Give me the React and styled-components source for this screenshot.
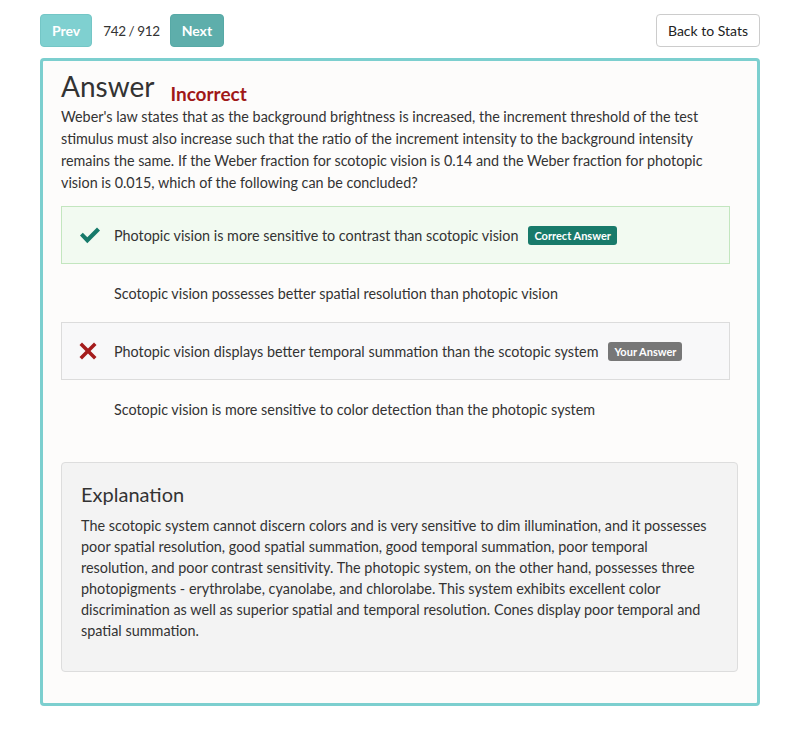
import React from "react";
import styled, { createGlobalStyle } from "styled-components";

const Global = createGlobalStyle`
  html, body { margin: 0; padding: 0; background: #ffffff; }
  body { font-family: Lato, "Open Sans", sans-serif; color: #333333; }
  * { box-sizing: border-box; }
`;

const Page = styled.div`
  padding: 14px 40px 24px 40px;
`;

const Toolbar = styled.div`
  display: flex;
  justify-content: space-between;
  align-items: center;
  height: 33px;
`;

const NavGroup = styled.div`
  display: flex;
  align-items: center;
`;

const NavButton = styled.button`
  height: 33px;
  padding: 0 11px;
  border: 1px solid ${(p) => (p.$dark ? "#57a9a6" : "#74c6c6")};
  border-radius: 4px;
  background: ${(p) => (p.$dark ? "#5eaeab" : "#7fd0d0")};
  color: #ffffff;
  font-family: Lato, sans-serif;
  font-weight: 700;
  font-size: 14px;
`;

const Counter = styled.span`
  margin: 0 10px 0 11px;
  font-size: 13.5px;
  letter-spacing: -0.4px;
  color: #333;
`;

const StatsButton = styled.button`
  height: 33px;
  padding: 0 11px;
  border: 1px solid #cccccc;
  border-radius: 4px;
  background: #ffffff;
  color: #222;
  font-family: Lato, sans-serif;
  font-size: 14px;
`;

const Card = styled.div`
  margin-top: 11px;
  border: 3px solid #7ccfcf;
  border-radius: 4px;
  background: #fdfcfb;
  padding: 8px 19px 31px 18px;
`;

const TitleRow = styled.div`
  display: flex;
  align-items: flex-end;
  gap: 16px;
`;

const Title = styled.h1`
  margin: 0;
  font-size: 28px;
  font-weight: 400;
  line-height: 34px;
  color: #333;
`;

const Status = styled.span`
  font-size: 19px;
  font-weight: 700;
  color: #a01818;
  line-height: 24px;
  position: relative;
  top: 3px;
`;

const Question = styled.p`
  margin: 3px 0 12px 0;
  font-size: 14.35px;
  line-height: 22px;
`;

const Options = styled.div`
  margin-right: 8px;
`;

const Option = styled.div`
  display: flex;
  align-items: center;
  height: 58px;
  padding-left: 17px;
  border: 1px solid ${(p) => p.$border || "transparent"};
  background: ${(p) => p.$bg || "transparent"};
  font-size: 14.35px;
`;

const IconBox = styled.span`
  width: 35px;
  display: flex;
  align-items: center;
`;

const Badge = styled.span`
  margin-left: 10px;
  padding: 3px 6px 3px;
  border-radius: 3px;
  background: ${(p) => p.$bg};
  color: #fff;
  font-size: 11px;
  font-weight: 700;
  line-height: 13px;
`;

const Explanation = styled.div`
  margin-top: 24px;
  background: #f3f3f3;
  border: 1px solid #dddddd;
  border-radius: 4px;
  padding: 17px 19px 30px 19px;
`;

const ExpTitle = styled.h2`
  margin: 0 0 7px 0;
  font-size: 20px;
  font-weight: 400;
  line-height: 28px;
  color: #333;
`;

const ExpText = styled.p`
  margin: 0;
  font-size: 14.4px;
  line-height: 21px;
`;

const Check = () => (
  <svg width="22" height="17" viewBox="0 0 22 17">
    <path d="M1 8.5 L3.8 5.7 L8.3 10.2 L18 0.5 L21 3.5 L8.3 16.2 Z" fill="#167a6a" />
  </svg>
);

const Cross = () => (
  <svg width="18" height="18" viewBox="0 0 18 18">
    <path d="M3 0.5 L9 6.5 L15 0.5 L17.5 3 L11.5 9 L17.5 15 L15 17.5 L9 11.5 L3 17.5 L0.5 15 L6.5 9 L0.5 3 Z" fill="#a51c1c" />
  </svg>
);

export default function App() {
  return (
    <>
      <Global />
      <Page>
        <Toolbar>
          <NavGroup>
            <NavButton>Prev</NavButton>
            <Counter>742 / 912</Counter>
            <NavButton $dark>Next</NavButton>
          </NavGroup>
          <StatsButton>Back to Stats</StatsButton>
        </Toolbar>
        <Card>
          <TitleRow>
            <Title>Answer</Title>
            <Status>Incorrect</Status>
          </TitleRow>
          <Question>
            Weber's law states that as the background brightness is increased, the increment threshold of the test
            <br />
            stimulus must also increase such that the ratio of the increment intensity to the background intensity
            <br />
            remains the same. If the Weber fraction for scotopic vision is 0.14 and the Weber fraction for photopic
            <br />
            vision is 0.015, which of the following can be concluded?
          </Question>
          <Options>
            <Option $bg="#f2faf1" $border="#c3e6bf">
              <IconBox><Check /></IconBox>
              Photopic vision is more sensitive to contrast than scotopic vision
              <Badge $bg="#187a6a">Correct Answer</Badge>
            </Option>
            <Option>
              <IconBox />
              Scotopic vision possesses better spatial resolution than photopic vision
            </Option>
            <Option $bg="#f8f8f9" $border="#dcdcdc">
              <IconBox><Cross /></IconBox>
              Photopic vision displays better temporal summation than the scotopic system
              <Badge $bg="#777777">Your Answer</Badge>
            </Option>
            <Option>
              <IconBox />
              Scotopic vision is more sensitive to color detection than the photopic system
            </Option>
          </Options>
          <Explanation>
            <ExpTitle>Explanation</ExpTitle>
            <ExpText>
              The scotopic system cannot discern colors and is very sensitive to dim illumination, and it possesses
              <br />
              poor spatial resolution, good spatial summation, good temporal summation, poor temporal
              <br />
              resolution, and poor contrast sensitivity. The photopic system, on the other hand, possesses three
              <br />
              photopigments - erythrolabe, cyanolabe, and chlorolabe. This system exhibits excellent color
              <br />
              discrimination as well as superior spatial and temporal resolution. Cones display poor temporal and
              <br />
              spatial summation.
            </ExpText>
          </Explanation>
        </Card>
      </Page>
    </>
  );
}
